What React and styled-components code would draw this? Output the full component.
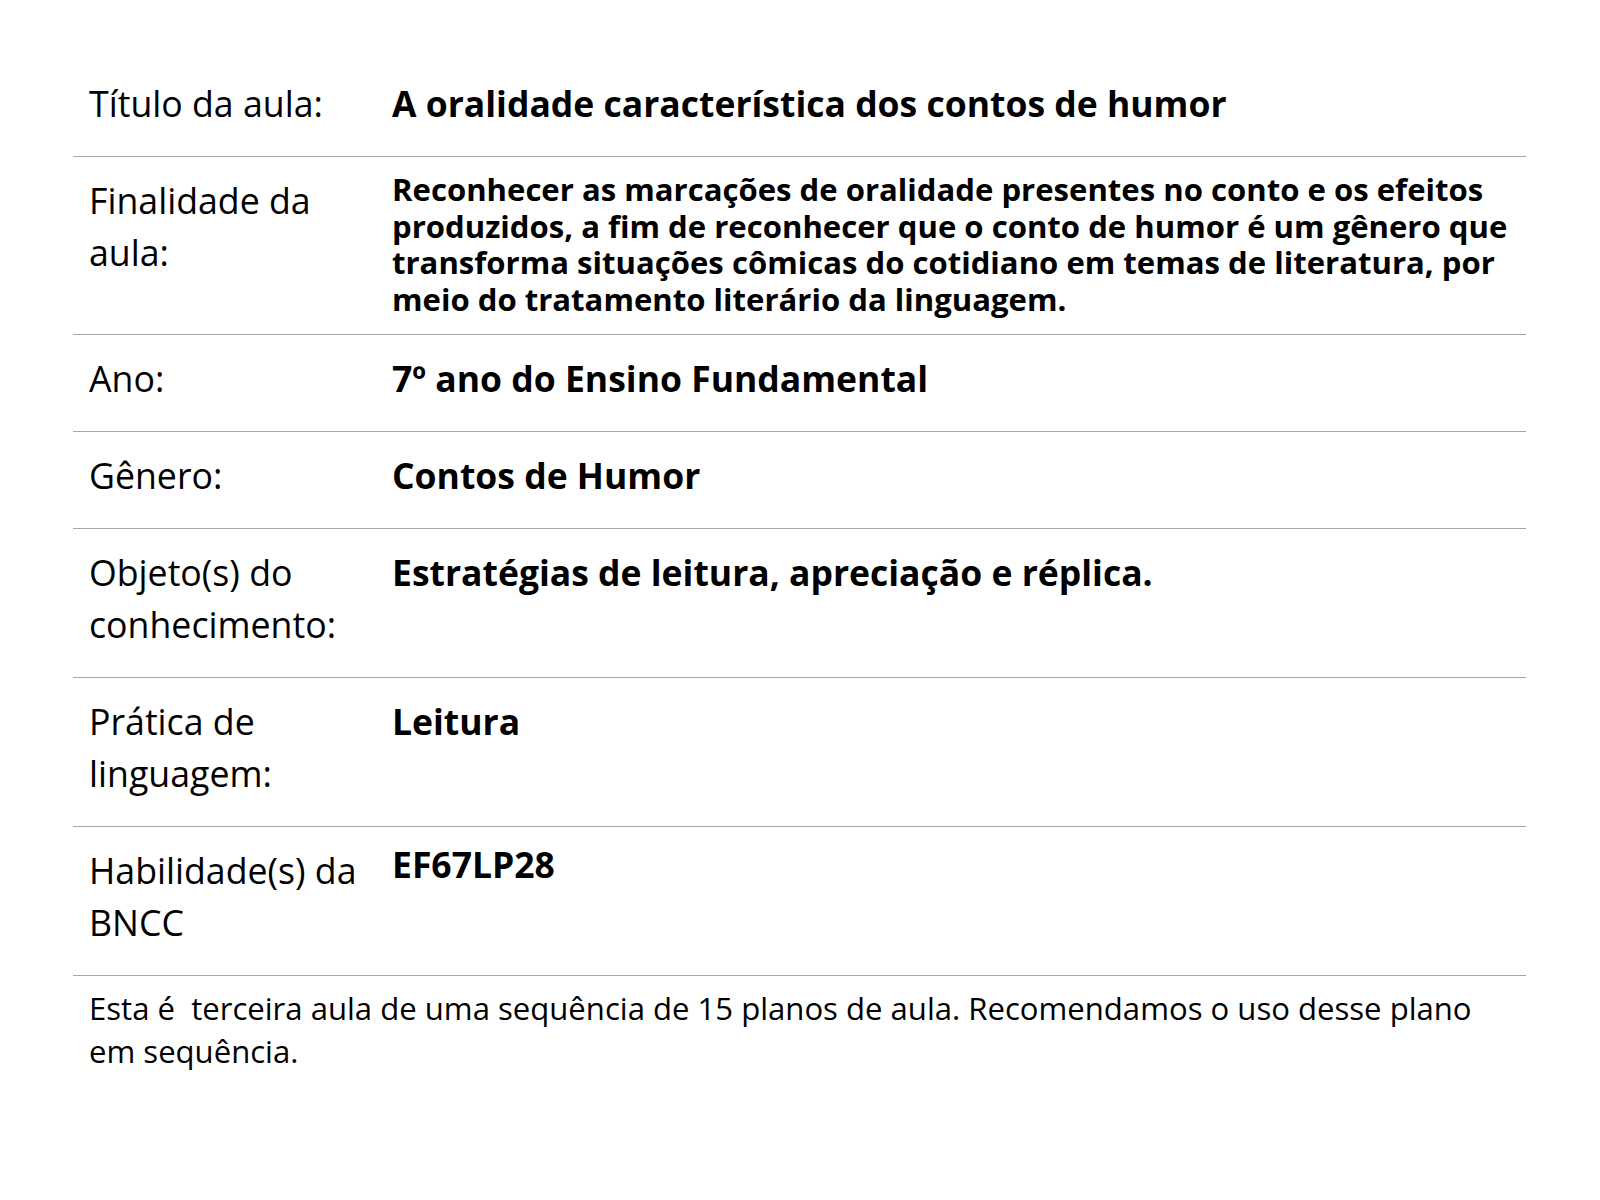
import React from 'react'
import styled, { createGlobalStyle } from 'styled-components'

const GlobalStyle = createGlobalStyle`
  body {
    margin: 0;
    background: #fff;
    color: #000;
    font-family: "Open Sans", "Liberation Sans", sans-serif;
  }
`

const Page = styled.div`
  padding: 60px 74px 40px 73px;
`

const Table = styled.div`
  display: flex;
  flex-direction: column;
`

const Row = styled.div`
  display: grid;
  grid-template-columns: 303px 1fr;
  border-bottom: 1px solid #a6a6a6;
`

const Label = styled.div`
  padding: 17px 16px 27px 16px;
  font-size: 35.7px;
  line-height: 52px;
  font-weight: 400;
`

const Value = styled.div`
  padding: ${(p) => (p.small ? '14px 0 16px 16px' : p.pad || '17px 16px 27px')};
  font-size: ${(p) => (p.small ? '31.1px' : '35.5px')};
  line-height: ${(p) => (p.small ? '36.7px' : '52px')};
  font-weight: 700;
  white-space: ${(p) => (p.small ? 'nowrap' : 'normal')};
`

const Note = styled.p`
  margin: 0;
  padding: 11px 16px;
  font-size: 31.1px;
  line-height: 43px;
`

const rows = [
  { label: 'Título da aula:', value: 'A oralidade característica dos contos de humor' },
  {
    label: 'Finalidade da aula:',
    value: [
      'Reconhecer as marcações de oralidade presentes no conto e os efeitos',
      'produzidos, a fim de reconhecer que o conto de humor é um gênero que',
      'transforma situações cômicas do cotidiano em temas de literatura, por',
      'meio do tratamento literário da linguagem.',
    ],
    small: true,
  },
  { label: 'Ano:', value: '7º ano do Ensino Fundamental' },
  { label: 'Gênero:', value: 'Contos de Humor' },
  { label: 'Objeto(s) do conhecimento:', value: 'Estratégias de leitura, apreciação e réplica.' },
  { label: 'Prática de linguagem:', value: 'Leitura' },
  { label: 'Habilidade(s) da BNCC', value: 'EF67LP28', pad: '11px 16px 27px' },
]

export default function App() {
  return (
    <>
      <GlobalStyle />
      <Page>
        <Table>
          {rows.map((r) => (
            <Row key={r.label}>
              <Label>{r.label}</Label>
              <Value small={r.small} pad={r.pad}>
                {Array.isArray(r.value)
                  ? r.value.map((line, i) => (
                      <React.Fragment key={i}>
                        {i > 0 && <br />}
                        {line}
                      </React.Fragment>
                    ))
                  : r.value}
              </Value>
            </Row>
          ))}
        </Table>
        <Note>
          Esta é{'\u00a0'} terceira aula de uma sequência de 15 planos de aula. Recomendamos o uso desse plano em sequência.
        </Note>
      </Page>
    </>
  )
}
